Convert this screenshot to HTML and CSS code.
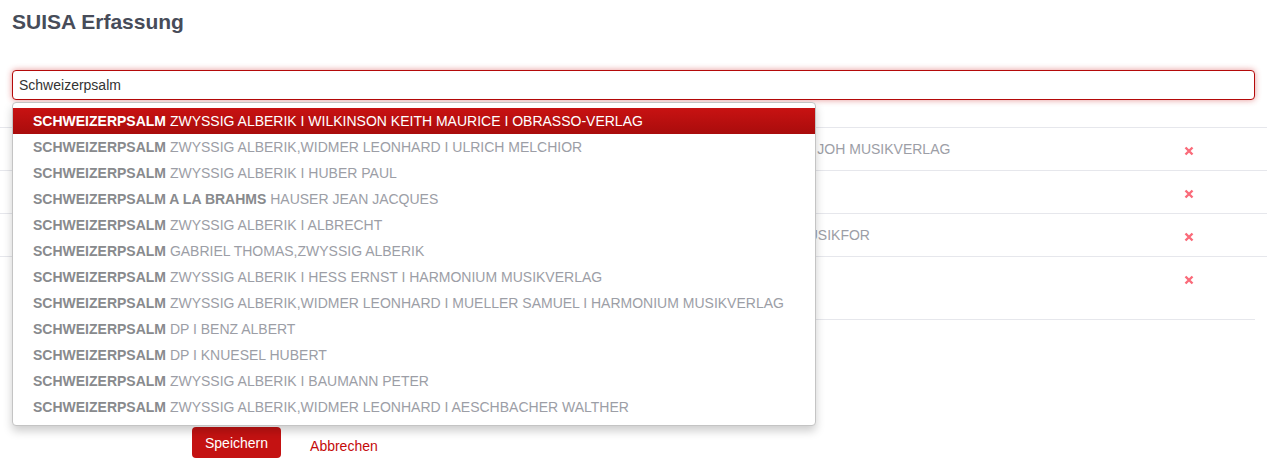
FILE: index.html
```html
<!DOCTYPE html>
<html lang="de">
<head>
<meta charset="utf-8">
<title>SUISA Erfassung</title>
<link rel="stylesheet" href="styles.css">
</head>
<body>
<div class="page">
  <h1 class="title">SUISA Erfassung</h1>

  <div class="search">
    <input class="search-input" type="text" value="Schweizerpsalm">
    <ul class="dropdown">
      <li class="opt active"><b>SCHWEIZERPSALM</b> ZWYSSIG ALBERIK I WILKINSON KEITH MAURICE I OBRASSO-VERLAG</li>
      <li class="opt"><b>SCHWEIZERPSALM</b> ZWYSSIG ALBERIK,WIDMER LEONHARD I ULRICH MELCHIOR</li>
      <li class="opt"><b>SCHWEIZERPSALM</b> ZWYSSIG ALBERIK I HUBER PAUL</li>
      <li class="opt"><b>SCHWEIZERPSALM A LA BRAHMS</b> HAUSER JEAN JACQUES</li>
      <li class="opt"><b>SCHWEIZERPSALM</b> ZWYSSIG ALBERIK I ALBRECHT</li>
      <li class="opt"><b>SCHWEIZERPSALM</b> GABRIEL THOMAS,ZWYSSIG ALBERIK</li>
      <li class="opt"><b>SCHWEIZERPSALM</b> ZWYSSIG ALBERIK I HESS ERNST I HARMONIUM MUSIKVERLAG</li>
      <li class="opt"><b>SCHWEIZERPSALM</b> ZWYSSIG ALBERIK,WIDMER LEONHARD I MUELLER SAMUEL I HARMONIUM MUSIKVERLAG</li>
      <li class="opt"><b>SCHWEIZERPSALM</b> DP I BENZ ALBERT</li>
      <li class="opt"><b>SCHWEIZERPSALM</b> DP I KNUESEL HUBERT</li>
      <li class="opt"><b>SCHWEIZERPSALM</b> ZWYSSIG ALBERIK I BAUMANN PETER</li>
      <li class="opt"><b>SCHWEIZERPSALM</b> ZWYSSIG ALBERIK,WIDMER LEONHARD I AESCHBACHER WALTHER</li>
    </ul>
  </div>

  <div class="list">
    <div class="list-head">
      <span class="cell-text">Werk</span>
      <span class="cell-del"></span>
    </div>
    <div class="list-row">
      <span class="cell-text">SCHWEIZERPSALM ZWYSSIG ALBERIK,WIDMER LEONHARD I ULRICH MELCHIOR I HUG MUSIKVERLAGE I HUG &amp; CO I JOH MUSIKVERLAG</span>
      <span class="cell-del"><svg class="x-icon" viewBox="0 0 10 10" width="10" height="10"><path d="M1.5 1.5 L8.5 8.5 M8.5 1.5 L1.5 8.5"/></svg></span>
    </div>
    <div class="list-row">
      <span class="cell-text">SCHWEIZERPSALM ZWYSSIG ALBERIK I HUBER PAUL</span>
      <span class="cell-del"><svg class="x-icon" viewBox="0 0 10 10" width="10" height="10"><path d="M1.5 1.5 L8.5 8.5 M8.5 1.5 L1.5 8.5"/></svg></span>
    </div>
    <div class="list-row">
      <span class="cell-text">SCHWEIZERPSALM ZWYSSIG ALBERIK I HESS ERNST I HARMONIUM MUSIKVERLAG I SCHWEIZER MUSIK EDITION MUSIKFOR</span>
      <span class="cell-del"><svg class="x-icon" viewBox="0 0 10 10" width="10" height="10"><path d="M1.5 1.5 L8.5 8.5 M8.5 1.5 L1.5 8.5"/></svg></span>
    </div>
    <div class="list-row last">
      <span class="cell-text">SCHWEIZERPSALM DP I BENZ ALBERT</span>
      <span class="cell-del"><svg class="x-icon" viewBox="0 0 10 10" width="10" height="10"><path d="M1.5 1.5 L8.5 8.5 M8.5 1.5 L1.5 8.5"/></svg></span>
    </div>
  </div>
  <div class="list-end"></div>

  <div class="actions">
    <button class="btn-save" type="button">Speichern</button>
    <a class="link-cancel" href="#">Abbrechen</a>
  </div>
</div>
</body>
</html>
```

FILE: styles.css
```css
* { box-sizing: border-box; }

html, body {
  margin: 0;
  padding: 0;
  background: #fff;
  font-family: "Liberation Sans", Arial, Helvetica, sans-serif;
  font-size: 14px;
  color: #333;
  overflow: hidden;
}

.page {
  padding: 0 12px;
}

.title {
  margin: 10px 0 36px;
  font-size: 21px;
  line-height: 24px;
  font-weight: bold;
  color: #474c59;
}

.search {
  position: relative;
  height: 30px;
}

.search-input {
  display: block;
  width: 100%;
  height: 30px;
  margin: 0;
  padding: 0 6px;
  border: 1px solid #b40a0a;
  border-radius: 4px;
  font-family: inherit;
  font-size: 14px;
  color: #333;
  background: #fff;
  outline: none;
  box-shadow: 0 0 6px rgba(200, 20, 20, 0.45);
}

.dropdown {
  position: absolute;
  top: 32px;
  left: 0;
  width: 804px;
  margin: 0;
  padding: 5px 0;
  list-style: none;
  background: #fff;
  border: 1px solid #c4c4c4;
  border-radius: 4px;
  box-shadow: 0 5px 10px rgba(0, 0, 0, 0.2);
  z-index: 10;
}

.opt {
  padding: 0 20px;
  height: 26px;
  line-height: 26px;
  white-space: nowrap;
  color: #9c9ea6;
}

.opt b {
  color: #888a8d;
}

.opt.active {
  background: linear-gradient(#c81212, #a90c0c);
  color: #fff;
}

.opt.active b {
  color: #fff;
}

.list {
  margin: 0 -12px;
}

.list-head,
.list-row {
  display: grid;
  grid-template-columns: 1fr 60px;
  align-items: center;
  padding: 0 48px 0 20px;
  border-bottom: 1px solid #e6e7ec;
  white-space: nowrap;
  color: #9c9ea6;
}

.list-head {
  height: 28px;
  font-weight: bold;
  color: #666;
}

.list-row {
  height: 43px;
}

.list-row.last {
  height: 42px;
  border-bottom: none;
}

.cell-text {
  overflow: hidden;
}

.cell-del {
  display: flex;
  justify-content: center;
  padding-top: 3px;
}

.x-icon {
  display: block;
  stroke: #fa6b7a;
  stroke-width: 2.4;
  fill: none;
}

.list-end {
  margin-top: 20px;
  border-top: 1px solid #e6e7ec;
}

.actions {
  display: flex;
  align-items: center;
  gap: 29px;
  margin-top: 107px;
  padding-left: 180px;
}

.btn-save {
  height: 31px;
  padding: 0 13px;
  border: none;
  border-radius: 4px;
  background: #c41212;
  color: #fff;
  font-family: inherit;
  font-size: 14px;
}

.link-cancel {
  color: #c40a0a;
  text-decoration: none;
  font-size: 14px;
  padding-top: 6px;
}
```
